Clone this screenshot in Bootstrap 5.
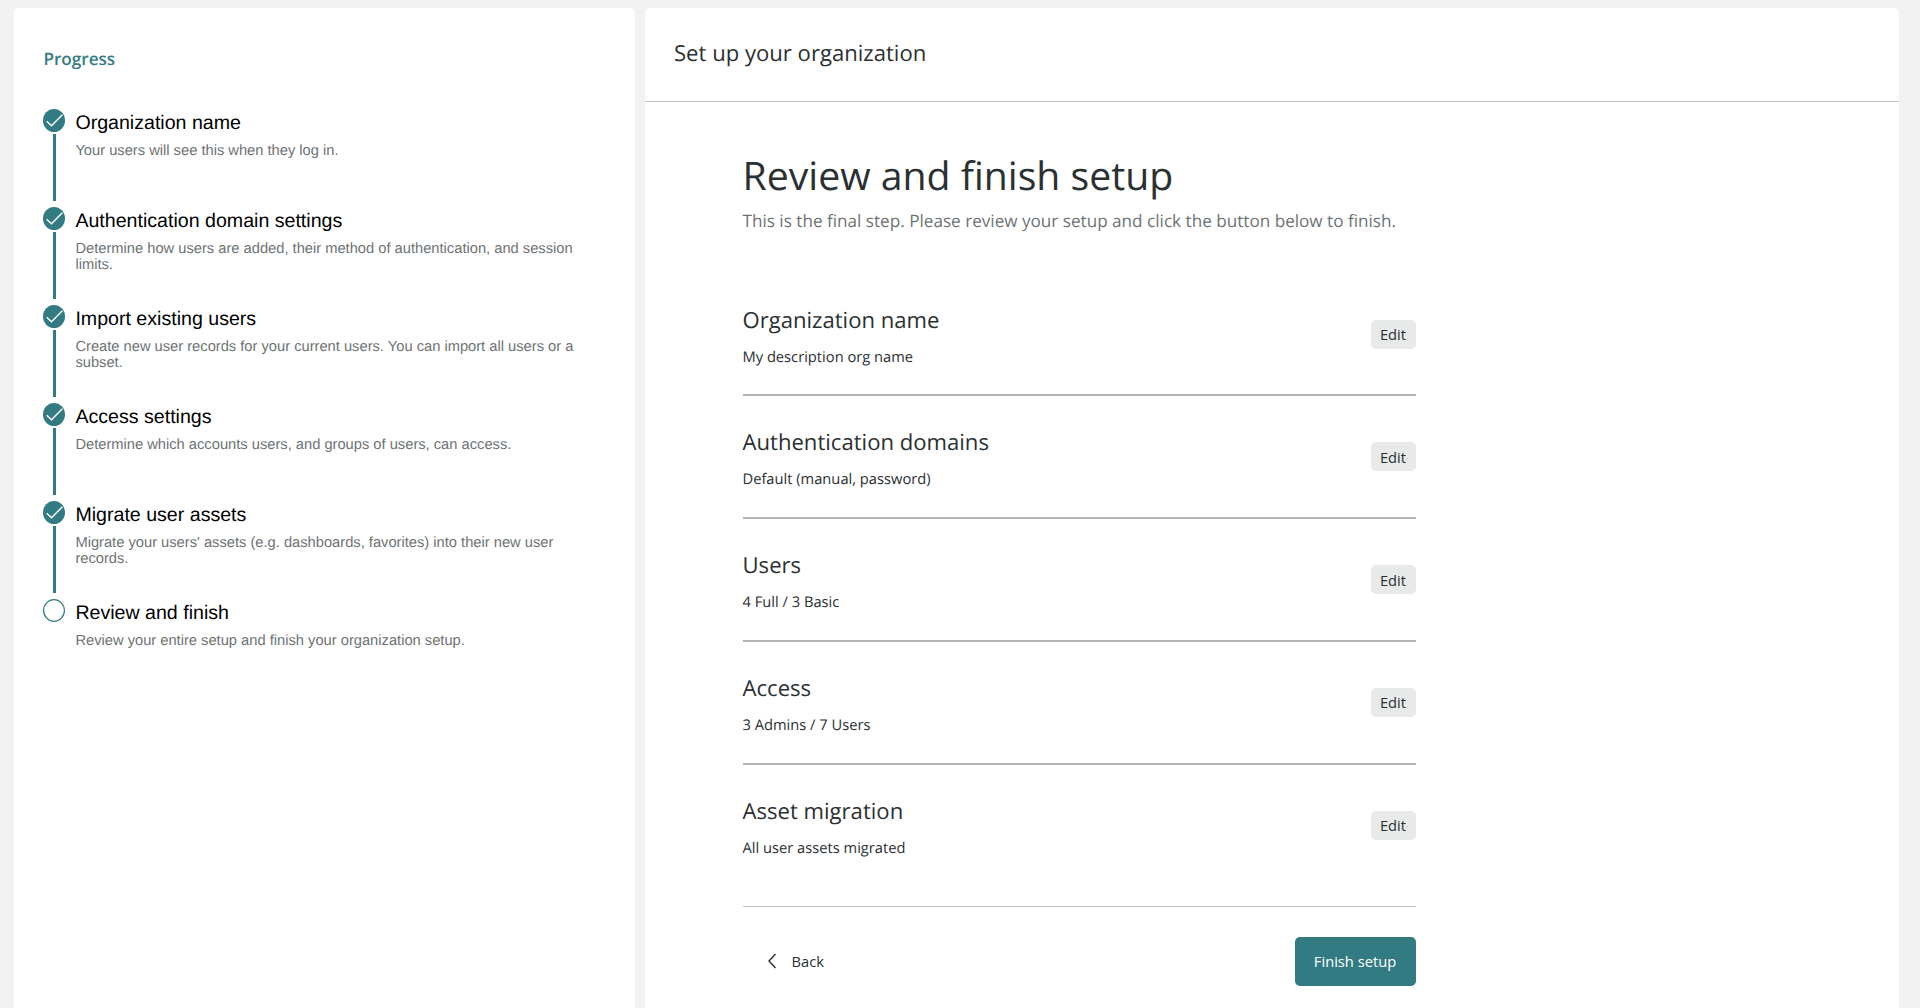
<!DOCTYPE html>
<html lang="en">
<head>
<meta charset="utf-8">
<meta name="viewport" content="width=device-width, initial-scale=1">
<title>Set up your organization</title>
<link href="https://cdn.jsdelivr.net/npm/bootstrap@5.3.0/dist/css/bootstrap.min.css" rel="stylesheet">
<style>
  :root { --teal: #337b82; --ink: #2b3032; --muted-ink: #6d7375; }
  body { height: 1008px; overflow: hidden; background: #f2f2f2; color: var(--ink); font-family: "Open Sans", sans-serif; padding: 8px 21px 0 14px; gap: 9.500px; text-rendering: geometricPrecision; }
  .panel { background: #fff; border-radius: 5px 5px 0 0; height: 1000px; }
  .progress-panel { width: 621px; padding: 40px 30px 0 29.4px; }
  .progress-title { font-size: 17.14px; line-height: 24px; font-weight: 600; color: var(--teal); margin: 0 0 37px; }
  .step { height: 98px; gap: 10px; font-family: "Liberation Sans", Arial, sans-serif; }
  .step-rail { width: 22px; flex: none; }
  .step-rail svg { display: block; width: 22px; height: 23px; }
  .step-line { width: 3px; height: 67px; margin-top: 1.5px; background: var(--teal); }
  .step-name { font-size: 19.6px; line-height: 24px; margin: 2px 0 7.5px; color: #000; }
  .step-text { font-size: 14.69px; line-height: 16.3px; margin: 0; color: var(--muted-ink); max-width: 505px; }
  .panel-head { height: 94px; border-bottom: 1px solid #c2c4c5; padding: 29px 29.5px 0; }
  .panel-head h2 { font-size: 22.1px; line-height: 32px; font-weight: 400; margin: 0; }
  .review { width: 673px; margin-left: 98px; padding-top: 45px; }
  .review h1 { font-size: 39.2px; line-height: 58px; font-weight: 400; margin: 0; }
  .intro { font-size: 17.14px; line-height: 24px; margin: 4.5px 0 0; color: var(--muted-ink); }
  .entries { margin-top: 40px; }
  .entry { height: 122.8px; border-bottom: 2px solid #b2b4b5; padding-top: 30px; }
  .entry:last-child { border-bottom: 0; }
  .entry h3 { font-size: 22.1px; line-height: 32px; font-weight: 400; margin: 0 0 11px; }
  .entry p { font-size: 14.69px; line-height: 20px; margin: 0; }
  .btn-edit { font-size: 14.69px; line-height: 20px; width: 45px; height: 29px; padding: 0; margin-top: 16px; border: 0; border-radius: 5px; background: #e8eaea; color: var(--ink); }
  .actions { border-top: 1px solid #c2c4c5; margin-top: 19px; padding: 30px 0 0 24px; }
  .btn-back { font-size: 14.69px; color: var(--ink); gap: 15px; padding: 0 0 1px; border: 0; }
  .btn-finish { width: 121px; height: 49px; padding: 0 0 1px; font-size: 14.69px; border: 0; border-radius: 5px; background: var(--teal); color: #fff; }
</style>
<script src="https://cdn.jsdelivr.net/npm/bootstrap@5.3.0/dist/js/bootstrap.bundle.min.js"></script>
</head>
<body class="d-flex">
<svg class="d-none"><symbol id="done" viewBox="0 0 22 23"><ellipse cx="11" cy="11.5" rx="11" ry="11.5" fill="#337b82"/><path d="M3.700 12.200l4.800 4.600L19.300 5.800" fill="none" stroke="#fff" stroke-width="1.4"/></symbol></svg>
<aside class="panel progress-panel">
  <h2 class="progress-title">Progress</h2>
  <div class="step d-flex"><div class="step-rail d-flex flex-column align-items-center"><svg><use href="#done"/></svg><div class="step-line"></div></div><div><h3 class="step-name">Organization name</h3><p class="step-text">Your users will see this when they log in.</p></div></div>
  <div class="step d-flex"><div class="step-rail d-flex flex-column align-items-center"><svg><use href="#done"/></svg><div class="step-line"></div></div><div><h3 class="step-name">Authentication domain settings</h3><p class="step-text">Determine how users are added, their method of authentication, and session limits.</p></div></div>
  <div class="step d-flex"><div class="step-rail d-flex flex-column align-items-center"><svg><use href="#done"/></svg><div class="step-line"></div></div><div><h3 class="step-name">Import existing users</h3><p class="step-text">Create new user records for your current users. You can import all users or a subset.</p></div></div>
  <div class="step d-flex"><div class="step-rail d-flex flex-column align-items-center"><svg><use href="#done"/></svg><div class="step-line"></div></div><div><h3 class="step-name">Access settings</h3><p class="step-text">Determine which accounts users, and groups of users, can access.</p></div></div>
  <div class="step d-flex"><div class="step-rail d-flex flex-column align-items-center"><svg><use href="#done"/></svg><div class="step-line"></div></div><div><h3 class="step-name">Migrate user assets</h3><p class="step-text">Migrate your users' assets (e.g. dashboards, favorites) into their new user records.</p></div></div>
  <div class="step d-flex"><div class="step-rail"><svg viewBox="0 0 22 23"><ellipse cx="11" cy="11.5" rx="10.4" ry="10.9" fill="#fff" stroke="#337b82" stroke-width="1.2"/></svg></div><div><h3 class="step-name">Review and finish</h3><p class="step-text">Review your entire setup and finish your organization setup.</p></div></div>
</aside>
<main class="panel flex-grow-1">
  <header class="panel-head"><h2>Set up your organization</h2></header>
  <section class="review">
    <h1>Review and finish setup</h1>
    <p class="intro">This is the final step. Please review your setup and click the button below to finish.</p>
    <div class="entries">
      <div class="entry d-flex justify-content-between align-items-start"><div><h3>Organization name</h3><p>My description org name</p></div><button class="btn btn-edit">Edit</button></div>
      <div class="entry d-flex justify-content-between align-items-start"><div><h3>Authentication domains</h3><p>Default (manual, password)</p></div><button class="btn btn-edit">Edit</button></div>
      <div class="entry d-flex justify-content-between align-items-start"><div><h3>Users</h3><p>4 Full / 3 Basic</p></div><button class="btn btn-edit">Edit</button></div>
      <div class="entry d-flex justify-content-between align-items-start"><div><h3>Access</h3><p>3 Admins / 7 Users</p></div><button class="btn btn-edit">Edit</button></div>
      <div class="entry d-flex justify-content-between align-items-start"><div><h3>Asset migration</h3><p>All user assets migrated</p></div><button class="btn btn-edit">Edit</button></div>
    </div>
    <footer class="actions d-flex justify-content-between align-items-center">
      <button class="btn btn-back d-flex align-items-center"><svg width="10" height="16" viewBox="0 0 10 16"><path d="M8.5 1L2 8l6.500 7" fill="none" stroke="#2b3032" stroke-width="1.4"/></svg><span>Back</span></button>
      <button class="btn btn-finish">Finish setup</button>
    </footer>
  </section>
</main>
</body>
</html>
